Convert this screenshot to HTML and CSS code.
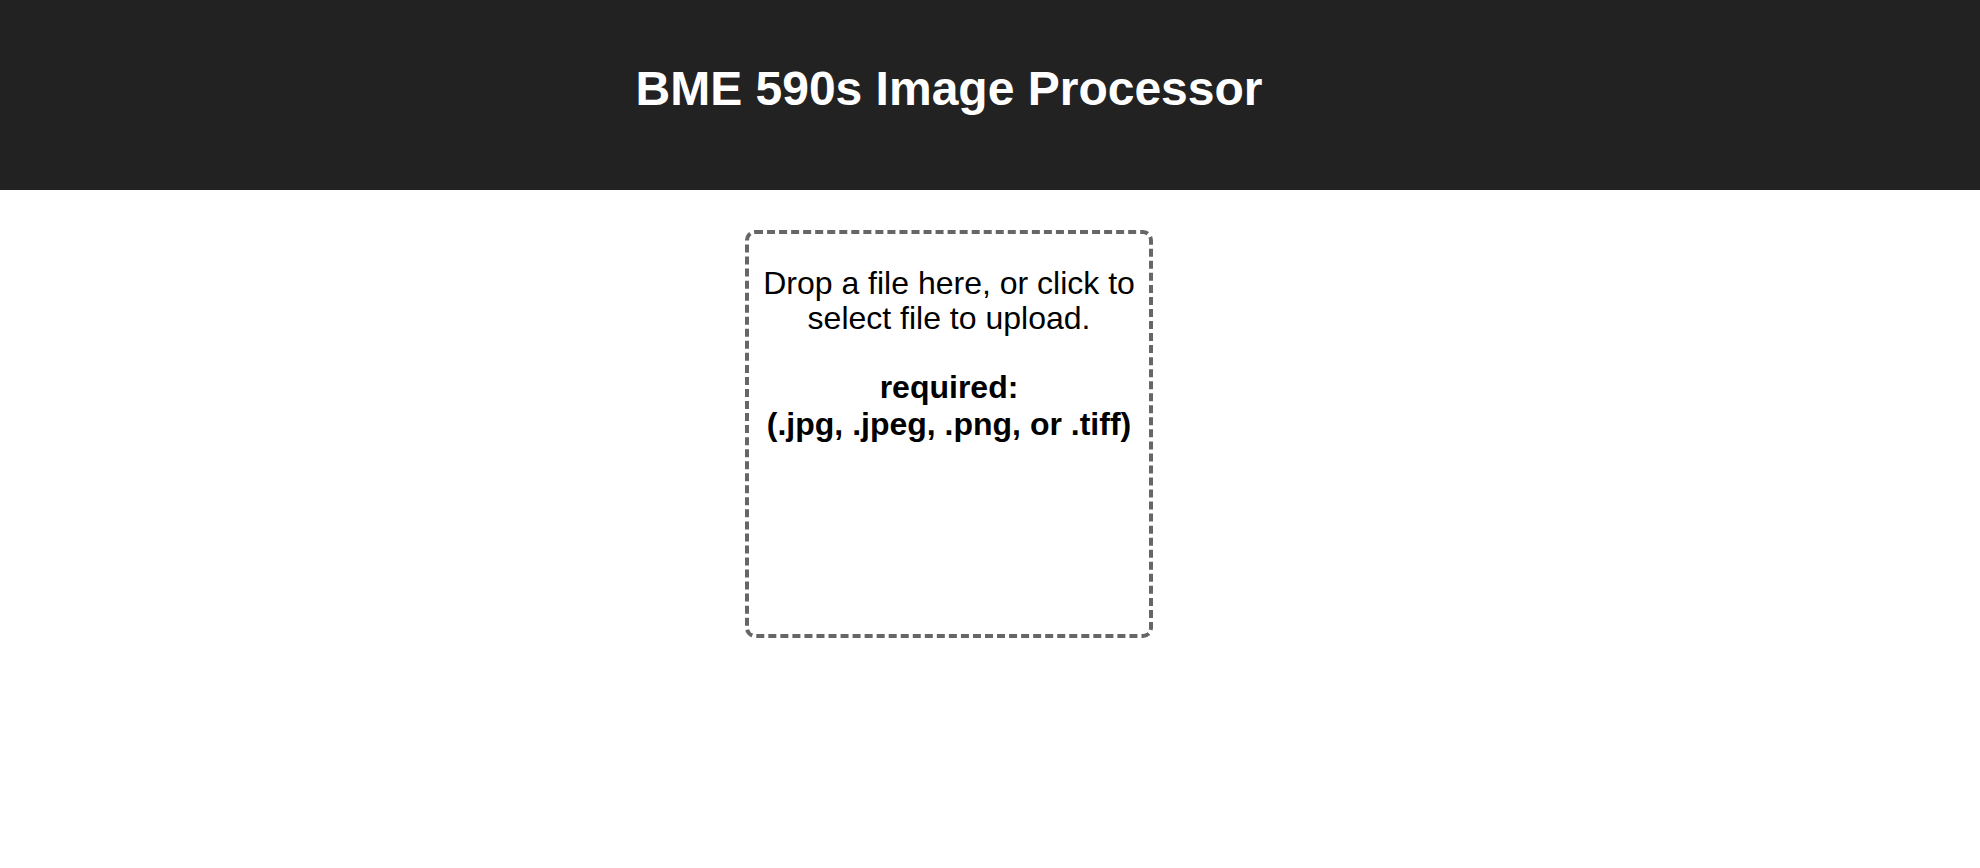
FILE: index.html
```html
<!DOCTYPE html>
<html lang="en">
<head>
    <meta charset="UTF-8">
    <title>BME 590s Image Processor</title>
    <link rel="stylesheet" href="styles.css">
</head>
<body>
    <header class="app-header">
        <h1 class="app-title">BME 590s Image Processor</h1>
    </header>

    <main class="app-main">
        <div class="dropzone">
            <p>Drop a file here, or click to select file to upload.</p>
            <p class="required">required:<br>(.jpg, .jpeg, .png, or .tiff)</p>
        </div>
    </main>
</body>
</html>
```

FILE: styles.css
```css
body {
    font-family: "Liberation Sans", Arial, Helvetica, sans-serif;
    margin: 0;
    background-color: #fff;
    color: #000;
}
.app-header {
    background-color: #222;
    height: 190px;
    box-sizing: border-box;
    padding: 61px 82px 0 0;
    text-align: center;
}
.app-title {
    margin: 0;
    font-size: 48px;
    font-weight: bold;
    color: #fff;
}
.app-main {
    display: flex;
    justify-content: center;
    padding: 40px 82px 0 0;
}
.dropzone {
    width: 400px;
    height: 400px;
    border: 4px dashed #666;
    border-radius: 10px;
    text-align: center;
    font-size: 32px;
    line-height: 35px;
    cursor: pointer;
}
.dropzone p {
    margin: 32px 6px;
}
.dropzone .required {
    margin-top: 33px;
    font-weight: bold;
    line-height: 37px;
}
```
